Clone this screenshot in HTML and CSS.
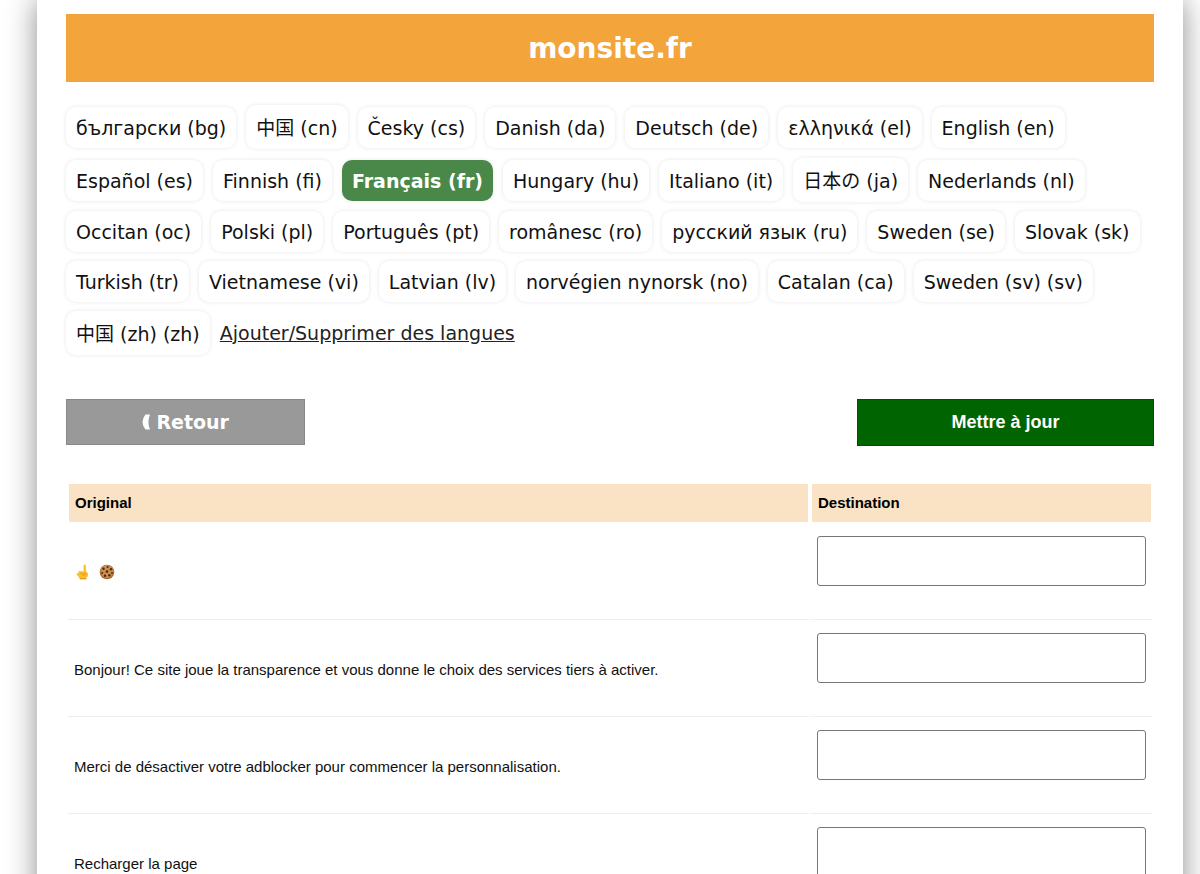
FILE: index.html
```html
<!DOCTYPE html>
<html lang="fr">
<head>
<meta charset="utf-8">
<meta name="viewport" content="width=device-width, initial-scale=1">
<title>monsite.fr</title>
<link rel="stylesheet" href="styles.css">
</head>
<body>
<main class="page">
  <h1 class="site-title">monsite.fr</h1>

  <nav class="languages" aria-label="Langues">
    <a class="lang" href="#bg">български (bg)</a>
    <a class="lang lang-cjk" href="#cn">中国 (cn)</a>
    <a class="lang" href="#cs">Česky (cs)</a>
    <a class="lang" href="#da">Danish (da)</a>
    <a class="lang" href="#de">Deutsch (de)</a>
    <a class="lang" href="#el">ελληνικά (el)</a>
    <a class="lang" href="#en">English (en)</a>
    <a class="lang" href="#es">Español (es)</a>
    <a class="lang" href="#fi">Finnish (fi)</a>
    <a class="lang lang-current" href="#fr" aria-current="true">Français (fr)</a>
    <a class="lang" href="#hu">Hungary (hu)</a>
    <a class="lang" href="#it">Italiano (it)</a>
    <a class="lang lang-cjk" href="#ja">日本の (ja)</a>
    <a class="lang" href="#nl">Nederlands (nl)</a>
    <a class="lang" href="#oc">Occitan (oc)</a>
    <a class="lang" href="#pl">Polski (pl)</a>
    <a class="lang" href="#pt">Português (pt)</a>
    <a class="lang" href="#ro">românesc (ro)</a>
    <a class="lang" href="#ru">русский язык (ru)</a>
    <a class="lang" href="#se">Sweden (se)</a>
    <a class="lang" href="#sk">Slovak (sk)</a>
    <a class="lang" href="#tr">Turkish (tr)</a>
    <a class="lang" href="#vi">Vietnamese (vi)</a>
    <a class="lang" href="#lv">Latvian (lv)</a>
    <a class="lang" href="#no">norvégien nynorsk (no)</a>
    <a class="lang" href="#ca">Catalan (ca)</a>
    <a class="lang" href="#sv">Sweden (sv) (sv)</a>
    <a class="lang lang-cjk" href="#zh">中国 (zh) (zh)</a>
    <a class="manage" href="#langues">Ajouter/Supprimer des langues</a>
  </nav>

  <form class="translations" action="#">
    <div class="actions">
      <a class="button button-back" href="#retour">
        <svg class="back-icon" viewBox="0 0 8 16" aria-hidden="true"><path fill="#fff" d="M3.500.5H8Q4.800 8 8 15.500H3.500Q-2.500 8 3.500.5z"/></svg>
        Retour
      </a>
      <button class="button button-save" type="submit">Mettre à jour</button>
    </div>

    <table class="strings">
      <thead>
        <tr><th scope="col">Original</th><th class="col-target" scope="col">Destination</th></tr>
      </thead>
      <tbody>
        <tr>
          <td>
            <label class="emoji-label" for="t1">
              <svg class="emoji" viewBox="0 0 16 16" role="img" aria-label="Index levé">
                <path fill="#fcbf2b" d="M9.500 8V1.800Q9.700.6 10.700.6t1.100 1.200l.3 5.600 1.400 1.100q.8.900.6 2.200-.3 2.200-1.700 3.400l-.2 1.400H5.900l-.2-1.300-2.300-2.700q-1.300-1.700-.4-2.300.7-.4 1.500.4V7.900q.2-1.200 1.300-.9l1.200.3q.8-.9 2.500.7z"/>
                <path fill="none" stroke="#e58e1d" stroke-width=".8" stroke-linecap="round" d="M6.700 9.500l1.300.8 1-1.300 2.500.5q.6.900-.5 1.400l-2.100.5M6.200 14.600h5.700"/>
              </svg>
              <svg class="emoji" viewBox="0 0 16 16" role="img" aria-label="Cookie">
                <circle cx="8" cy="8" r="7.300" fill="#a9682f"/>
                <circle cx="8" cy="7.500" r="6.500" fill="#cc8e4c"/>
                <g fill="#4b2818">
                  <circle cx="4.500" cy="4.700" r="1.200"/><circle cx="8.600" cy="3" r="1"/><circle cx="12" cy="5.200" r="1.200"/>
                  <circle cx="8" cy="7.600" r="1.300"/><circle cx="3.200" cy="9" r="1"/><circle cx="6" cy="11.700" r="1.200"/>
                  <circle cx="10.400" cy="11.300" r="1.200"/><circle cx="13" cy="9" r="1"/>
                </g>
              </svg>
            </label>
          </td>
          <td class="target"><textarea id="t1"></textarea></td>
        </tr>
        <tr>
          <td><label for="t2">Bonjour! Ce site joue la transparence et vous donne le choix des services tiers à activer.</label></td>
          <td class="target"><textarea id="t2"></textarea></td>
        </tr>
        <tr>
          <td><label for="t3">Merci de désactiver votre adblocker pour commencer la personnalisation.</label></td>
          <td class="target"><textarea id="t3"></textarea></td>
        </tr>
        <tr>
          <td><label for="t4">Recharger la page</label></td>
          <td class="target"><textarea id="t4"></textarea></td>
        </tr>
      </tbody>
    </table>
  </form>
</main>
</body>
</html>
```
FILE: styles.css
```css
* {
  box-sizing: border-box;
}

body {
  margin: 0;
  background: #fff;
  color: #111;
  font-family: Verdana, "DejaVu Sans", "Noto Sans CJK SC", sans-serif;
  font-size: 19px;
}

.page {
  min-height: 100vh;
  margin: 0 17px 0 37px;
  padding: 14px 29px;
  background: #fff;
  box-shadow: 0 0 28px rgba(0, 0, 0, 0.45);
}

.site-title {
  margin: 0 0 23px;
  padding: 17px 16px 15px;
  background: #f3a43b;
  color: #fff;
  font-size: 28px;
  line-height: 36px;
  text-align: center;
}

.languages {
  display: flex;
  flex-wrap: wrap;
  align-items: center;
  gap: 9px 10px;
}

.lang {
  padding: 9px 10px 7px;
  border-radius: 10px;
  box-shadow: 0 0 4px rgba(0, 0, 0, 0.1);
  color: #111;
  line-height: 25px;
  text-decoration: none;
}

.lang-cjk {
  line-height: 28px;
}

.lang-current {
  background: #4a884a;
  color: #fff;
  font-weight: bold;
}

.manage {
  color: #222;
}

.actions {
  display: flex;
  justify-content: space-between;
  align-items: flex-start;
  margin: 44px 0 35px;
}

.button {
  border: 1px solid;
  color: #fff;
  font-weight: bold;
  text-align: center;
  text-decoration: none;
}

.button-back {
  display: flex;
  justify-content: center;
  align-items: center;
  gap: 6px;
  width: 22%;
  padding: 10px;
  border-color: #888;
  background: #999;
  line-height: 24px;
}

.back-icon {
  width: 8px;
  height: 16px;
}

.button-save {
  width: 297px;
  padding: 10px;
  border-color: #005000;
  background: #006400;
  font-family: Arial, "Liberation Sans", sans-serif;
  font-size: 18px;
  line-height: 25px;
}

.strings {
  width: 100%;
  border-spacing: 2px;
  table-layout: fixed;
  font-family: Arial, "Liberation Sans", sans-serif;
  font-size: 15px;
}

.strings th {
  padding: 10px 6px;
  border: 1px solid transparent;
  background: #fae2c4;
  background-clip: padding-box;
  color: #000;
  line-height: 18px;
  text-align: left;
}

.strings .col-target {
  width: 341px;
}

.strings td {
  padding: 0 6px;
  border-bottom: 1px solid #eee;
}

.strings .target {
  padding: 11px 6px 33px;
}

.target textarea {
  display: block;
  width: 100%;
  height: 50px;
  border: 1px solid #767676;
  border-radius: 3px;
  background: #fff;
  resize: none;
}

.emoji-label {
  display: flex;
  gap: 9px;
}

.emoji {
  width: 16px;
  height: 16px;
}
```
